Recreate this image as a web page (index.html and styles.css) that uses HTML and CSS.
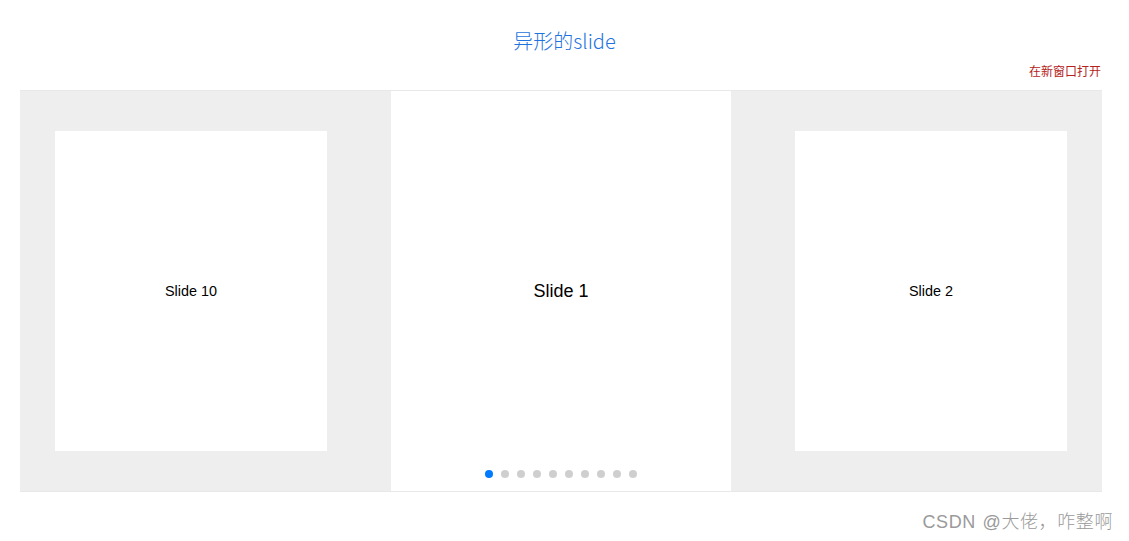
FILE: index.html
```html
<!DOCTYPE html>
<html lang="zh">
<head>
<meta charset="utf-8">
<title>异形的slide</title>
<link rel="stylesheet" href="styles.css">
</head>
<body>
<div class="page">
  <h1 class="title">异形的slide</h1>
  <div class="linkrow"><a class="newwin" href="#">在新窗口打开</a></div>
  <div class="swiper">
    <div class="track">
      <div class="slide side">Slide 10</div>
      <div class="slide active">Slide 1</div>
      <div class="slide side">Slide 2</div>
    </div>
    <div class="dots">
      <span class="dot on"></span><span class="dot"></span><span class="dot"></span><span class="dot"></span><span class="dot"></span><span class="dot"></span><span class="dot"></span><span class="dot"></span><span class="dot"></span><span class="dot"></span>
    </div>
  </div>
  <div class="mark">CSDN @大佬，咋整啊</div>
</div>
</body>
</html>
```

FILE: styles.css
```css
html, body {
  margin: 0;
  padding: 0;
  background: #fff;
  font-family: "Liberation Sans", Arial, "Noto Sans CJK SC", sans-serif;
}
.page {
  width: 1129px;
  height: 541px;
  position: relative;
  overflow: hidden;
}
.title {
  margin: 0;
  padding-top: 28px;
  height: 26px;
  line-height: 26px;
  font-size: 20px;
  font-weight: 300;
  text-align: center;
  color: #1f74de;
  font-family: "Noto Sans CJK SC", "Liberation Sans", sans-serif;
}
.linkrow {
  width: 1082px;
  margin: 9px 0 0 20px;
  height: 16px;
  line-height: 16px;
  text-align: right;
  font-size: 12px;
  font-family: "Noto Sans CJK SC", sans-serif;
}
.newwin {
  color: #b4221b;
  text-decoration: none;
  margin-right: 1px;
}
.swiper {
  position: relative;
  margin: 11px 0 0 20px;
  width: 1082px;
  height: 400px;
  background: #eee;
  overflow: hidden;
  border-top: 1px solid #e8e8e8;
  border-bottom: 1px solid #e8e8e8;
}
.track {
  display: flex;
  gap: 30px;
  margin-left: 1px;
  height: 400px;
}
.slide {
  flex: 0 0 340px;
  height: 400px;
  background: #fff;
  display: flex;
  align-items: center;
  justify-content: center;
  font-size: 18px;
  color: #000;
}
.slide.side {
  transform: scale(0.8);
}
.dots {
  position: absolute;
  left: 0;
  right: 0;
  bottom: 13px;
  display: flex;
  justify-content: center;
  gap: 8px;
}
.dot {
  width: 8px;
  height: 8px;
  border-radius: 50%;
  background: #cfcfcf;
}
.dot.on {
  background: #007aff;
}
.mark {
  position: absolute;
  right: 16px;
  top: 510px;
  font-size: 18px;
  line-height: 24px;
  font-weight: 300;
  color: #9a9a9a;
  font-family: "Liberation Sans", "Noto Sans CJK SC", sans-serif;
  word-spacing: 1px;
  letter-spacing: 0.6px;
}
```
